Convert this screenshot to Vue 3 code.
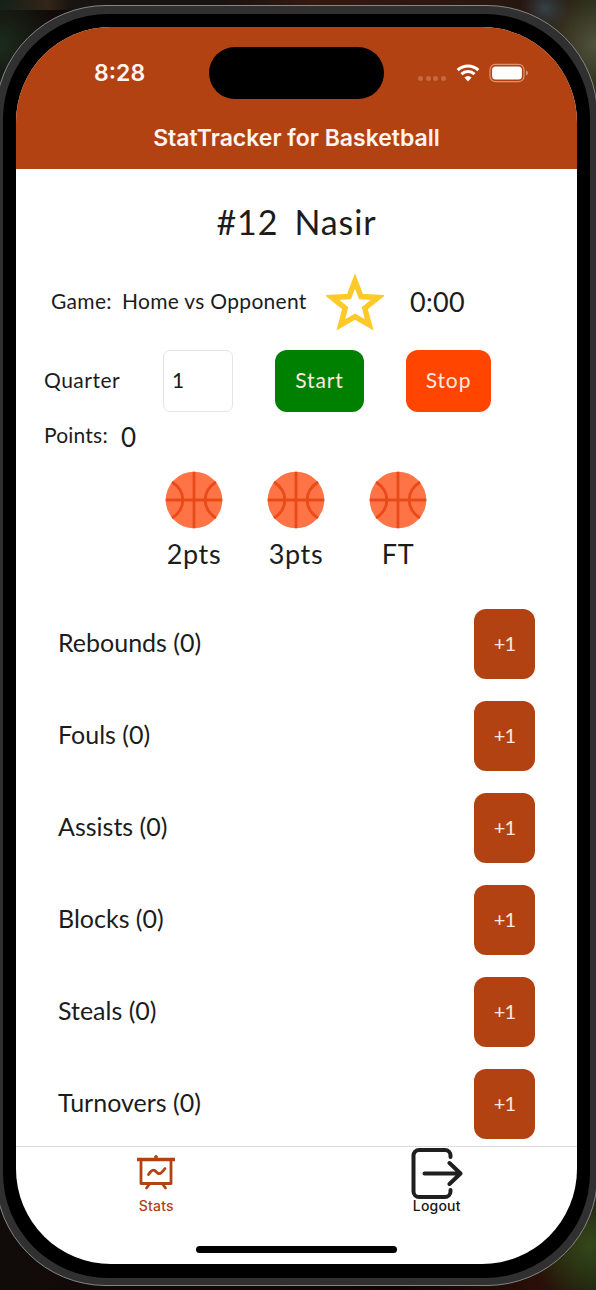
<template>
  <div class="desktop">
    <div class="phone">
      <div class="bezel">
        <div class="screen">
          <header class="header">
            <div class="status">
              <span class="time">8:28</span>
              <span class="island"></span>
              <div class="status-icons">
                <span class="dots"><i v-for="n in 4" :key="n"></i></span>
                <svg class="wifi" viewBox="0 0 24 18">
                  <path d="M1.7 6.1a15 15 0 0 1 20.6 0" />
                  <path d="M5.5 10.1a9.5 9.5 0 0 1 13 0" />
                  <path class="tip" d="M8.4 13.5a5.4 5.4 0 0 1 7.2 0L12 17.5z" />
                </svg>
                <svg class="battery" viewBox="0 0 40 20">
                  <rect class="shell" x="1" y="1.3" width="34" height="17.4" rx="5.4" />
                  <rect class="charge" x="3.1" y="3.4" width="29.8" height="13.2" rx="3.6" />
                  <path class="cap" d="M37 7.5q2 .8 2 2.5t-2 2.5z" />
                </svg>
              </div>
            </div>
            <h1 class="title">StatTracker for Basketball</h1>
          </header>

          <main class="content">
            <h2 class="player">#{{ player.number }}&nbsp; {{ player.name }}</h2>

            <div class="game">
              <span class="game-label">Game:</span>
              <span class="game-name">{{ gameName }}</span>
              <svg class="star" viewBox="0 0 58 58">
                <path d="M29 8l6 15.6 17 .9-13.2 10.7 4.4 16.6L29 43.7l-14.2 8.1 4.4-16.6L6 24.5l17-.9z" />
              </svg>
              <span class="clock">{{ clock }}</span>
            </div>

            <div class="quarter">
              <label class="quarter-label" for="quarter">Quarter</label>
              <input id="quarter" v-model="quarter" class="quarter-input" type="text" />
              <button class="start" @click="startClock">Start</button>
              <button class="stop" @click="stopClock">Stop</button>
            </div>

            <div class="points">
              <span class="points-label">Points:</span>
              <span class="points-value">{{ points }}</span>
            </div>

            <div class="shots">
              <div v-for="shot in shots" :key="shot.label" class="shot" @click="points += shot.value">
                <svg class="ball" viewBox="0 0 58 58">
                  <circle cx="29" cy="29" r="28.3" />
                  <path d="M29 .7v56.6M.7 29h56.6M7 11c14.5 9.5 14.5 26.5 0 36M51 11c-14.5 9.5-14.5 26.5 0 36" />
                </svg>
                <span class="shot-label">{{ shot.label }}</span>
              </div>
            </div>

            <ul class="stats">
              <li v-for="stat in stats" :key="stat.name">
                <span class="stat-name">{{ stat.name }} ({{ stat.count }})</span>
                <button class="plus" @click="stat.count++">+1</button>
              </li>
            </ul>
          </main>

          <nav class="tabs">
            <a class="tab active">
              <svg class="board" viewBox="0 0 40 36">
                <path class="bar" d="M1 5.5h38" />
                <path d="M5 6v23.5h30V6" />
                <path class="knob" d="M18.5 3a1.5 1.5 0 0 1 3 0z" />
                <path class="line" d="M12.5 20.5c4.5-6.5 6-4.5 8.5-2s4 1 8-4" />
                <path class="leg" d="M13.5 30l-3 4M26.5 30l3 4" />
              </svg>
              <span>Stats</span>
            </a>
            <a class="tab">
              <svg class="exit" viewBox="0 0 52 52">
                <path d="M39.5 9.5V8A5.5 5.5 0 0 0 34 2.5H8A5.5 5.5 0 0 0 2.5 8v36A5.5 5.5 0 0 0 8 49.500h26a5.5 5.5 0 0 0 5.5-5.5v-1.5" />
                <path d="M13.5 26h35M38.5 15.5L49.5 26l-11 10.5" />
              </svg>
              <span>Logout</span>
            </a>
          </nav>
          <div class="home"></div>
        </div>
      </div>
    </div>
  </div>
</template>

<script setup>
import { ref, computed, onUnmounted } from 'vue';

const player = ref({ number: 12, name: 'Nasir' });
const gameName = ref('Home vs Opponent');
const quarter = ref('1');
const points = ref(0);
const seconds = ref(0);
let timer = null;

const shots = [
  { label: '2pts', value: 2 },
  { label: '3pts', value: 3 },
  { label: 'FT', value: 1 }
];

const stats = ref([
  { name: 'Rebounds', count: 0 },
  { name: 'Fouls', count: 0 },
  { name: 'Assists', count: 0 },
  { name: 'Blocks', count: 0 },
  { name: 'Steals', count: 0 },
  { name: 'Turnovers', count: 0 }
]);

const clock = computed(() => {
  const rest = String(seconds.value % 60).padStart(2, '0');
  return `${Math.floor(seconds.value / 60)}:${rest}`;
});

const stopClock = () => {
  clearInterval(timer);
  timer = null;
};

const startClock = () => {
  if (timer) return;
  timer = setInterval(() => seconds.value++, 1000);
};

onUnmounted(stopClock);
</script>

<style>
body {
  margin: 0;
  background: #110d0a;
}
</style>

<style scoped>
* {
  box-sizing: border-box;
}

.desktop {
  width: 596px;
  height: 1290px;
  overflow: hidden;
  display: flex;
  padding-top: 5px;
  font-family: Lato, "Open Sans", sans-serif;
  font-weight: 400;
  color: #1c1c1c;
  background:
    radial-gradient(circle at 0 45px, #1b2b1b 0, transparent 60px),
    radial-gradient(circle at 545px 8px, #344247 0, transparent 25px),
    radial-gradient(circle at 596px 45px, #50523a 0, transparent 65px),
    radial-gradient(circle at 590px 1245px, #344719 0, transparent 60px),
    linear-gradient(90deg, #141b16 0, #352519 48px, #171411 70px, #171310 220px, #35180f 310px, #271610 520px, transparent 535px) 0 0 / 100% 10px no-repeat,
    linear-gradient(90deg, #110b09, #100504 400px, #290f08 540px, #1b210f);
}

.phone {
  flex: none;
  width: 603px;
  height: 1281px;
  margin-left: -5px;
  padding: 8px 7px 7px;
  border: 1px solid #858585;
  border-radius: 111px;
  background: #303030;
}

.bezel {
  width: 587px;
  height: 1264px;
  padding: 13px;
  border-radius: 105px;
  background: #000;
}

.screen {
  width: 561px;
  height: 1237px;
  border-radius: 95px;
  overflow: hidden;
  display: flex;
  flex-direction: column;
  background: #fff;
}

.header {
  flex: none;
  height: 142px;
  color: #fff5ee;
  background: #b34213;
  font-family: Inter, sans-serif;
}

.status {
  height: 91px;
  display: grid;
  grid-template-columns: 193px 175px 1fr;
  align-items: center;
}

.time {
  padding-left: 78px;
  font-size: 23px;
  font-weight: 600;
}

.island {
  height: 52px;
  border-radius: 26px;
  background: #000;
}

.status-icons {
  display: flex;
  align-items: center;
  padding-left: 34px;
}

.dots {
  display: flex;
  gap: 2.5px;
  padding-top: 12px;
}

.dots i {
  width: 5px;
  height: 5px;
  border-radius: 50%;
  background: #c56a40;
}

.wifi {
  width: 24px;
  height: 18px;
  margin-left: 10px;
  fill: none;
  stroke: #fff;
  stroke-width: 3.1;
}

.wifi .tip {
  fill: #fff;
  stroke: none;
}

.battery {
  width: 40px;
  height: 20px;
  margin-left: 9px;
}

.battery .shell {
  fill: none;
  stroke: #d99474;
  stroke-width: 1.2;
}

.battery .charge {
  fill: #fff;
}

.battery .cap {
  fill: #d99474;
}

.title {
  margin: 0;
  line-height: 40px;
  font-size: 23px;
  font-weight: 600;
  text-align: center;
}

.content {
  flex: none;
  height: 977px;
  overflow: hidden;
}

.player {
  margin: 0;
  height: 105px;
  line-height: 106px;
  font-size: 34px;
  font-weight: 400;
  text-align: center;
  letter-spacing: 0.9px;
  word-spacing: -1.5px;
}

.game {
  display: flex;
  align-items: center;
  height: 56px;
  padding-left: 35px;
  font-size: 21px;
  letter-spacing: 0.3px;
}

.game-label,
.game-name {
  padding-bottom: 4px;
}

.game-label {
  width: 71px;
}

.game-name {
  width: 204px;
}

.star {
  width: 58px;
  height: 58px;
  fill: none;
  stroke: #ffc929;
  stroke-width: 5.5;
}

.clock {
  margin-left: 26px;
  padding-bottom: 2px;
  font-size: 27px;
}

.quarter {
  display: flex;
  align-items: center;
  height: 62px;
  margin-top: 20px;
  padding-left: 28px;
  font-size: 21px;
  letter-spacing: 0.5px;
}

.quarter-label {
  width: 119px;
  padding-bottom: 3px;
}

.quarter-input {
  width: 70px;
  height: 62px;
  padding: 0 8px 4px;
  border: 1px solid #e5e5e5;
  border-radius: 7px;
  font: inherit;
  color: inherit;
}

button {
  border: none;
  border-radius: 12px;
  padding: 0 0 3px;
  font: inherit;
  letter-spacing: 0.9px;
  color: #ffe9de;
}

.start {
  width: 89px;
  height: 62px;
  margin-left: 42px;
  background: #008000;
}

.stop {
  width: 85px;
  height: 62px;
  margin-left: 42px;
  background: #ff4500;
}

.points {
  display: flex;
  align-items: center;
  height: 48px;
  padding-left: 28px;
  font-size: 21px;
  letter-spacing: 0.2px;
}

.points-label {
  width: 77px;
  padding-bottom: 4px;
}

.points-value {
  padding-top: 2px;
  font-size: 26px;
}

.shots {
  display: flex;
  gap: 44px;
  height: 149px;
  padding: 11px 0 0 149px;
}

.shot {
  width: 58px;
  display: flex;
  flex-direction: column;
  align-items: center;
}

.ball {
  width: 58px;
  height: 58px;
  fill: #ff7446;
}

.ball path {
  fill: none;
  stroke: #e84b19;
  stroke-width: 2.8;
}

.shot-label {
  line-height: 50px;
  font-size: 27px;
  letter-spacing: 0.6px;
}

.stats {
  margin: 0;
  padding: 0 42px;
  list-style: none;
}

.stats li {
  display: flex;
  justify-content: space-between;
  align-items: center;
  height: 70px;
  margin-bottom: 22px;
}

.stat-name {
  padding-bottom: 4px;
  font-size: 25px;
}

.plus {
  width: 61px;
  height: 70px;
  font-size: 20px;
  letter-spacing: -0.8px;
  background: #b34213;
}

.tabs {
  flex: none;
  display: grid;
  grid-template-columns: 1fr 1fr;
  height: 100px;
  border-top: 1px solid #dcdcdc;
  font-family: Inter, sans-serif;
  font-size: 14px;
  font-weight: 500;
}

.tab {
  display: flex;
  flex-direction: column;
  align-items: center;
  color: #171717;
}

.tab span {
  line-height: 16px;
  letter-spacing: 0.2px;
}

.tab svg {
  fill: none;
  stroke: #1f1f1f;
  stroke-linecap: round;
  stroke-linejoin: round;
}

.tab.active {
  color: #b34213;
}

.tab .board {
  width: 40px;
  height: 36px;
  margin: 7px 0 8px;
  stroke: #b34213;
  stroke-width: 2.8;
}

.board .bar {
  stroke-width: 3.4;
  stroke-linecap: butt;
}

.board .knob {
  fill: #b34213;
  stroke-width: 1;
}

.tab .exit {
  width: 52px;
  height: 53px;
  margin-bottom: -2px;
  stroke-width: 4;
}

.home {
  flex: none;
  width: 201px;
  height: 7px;
  margin: 0 auto;
  border-radius: 4px;
  background: #000;
}
</style>
